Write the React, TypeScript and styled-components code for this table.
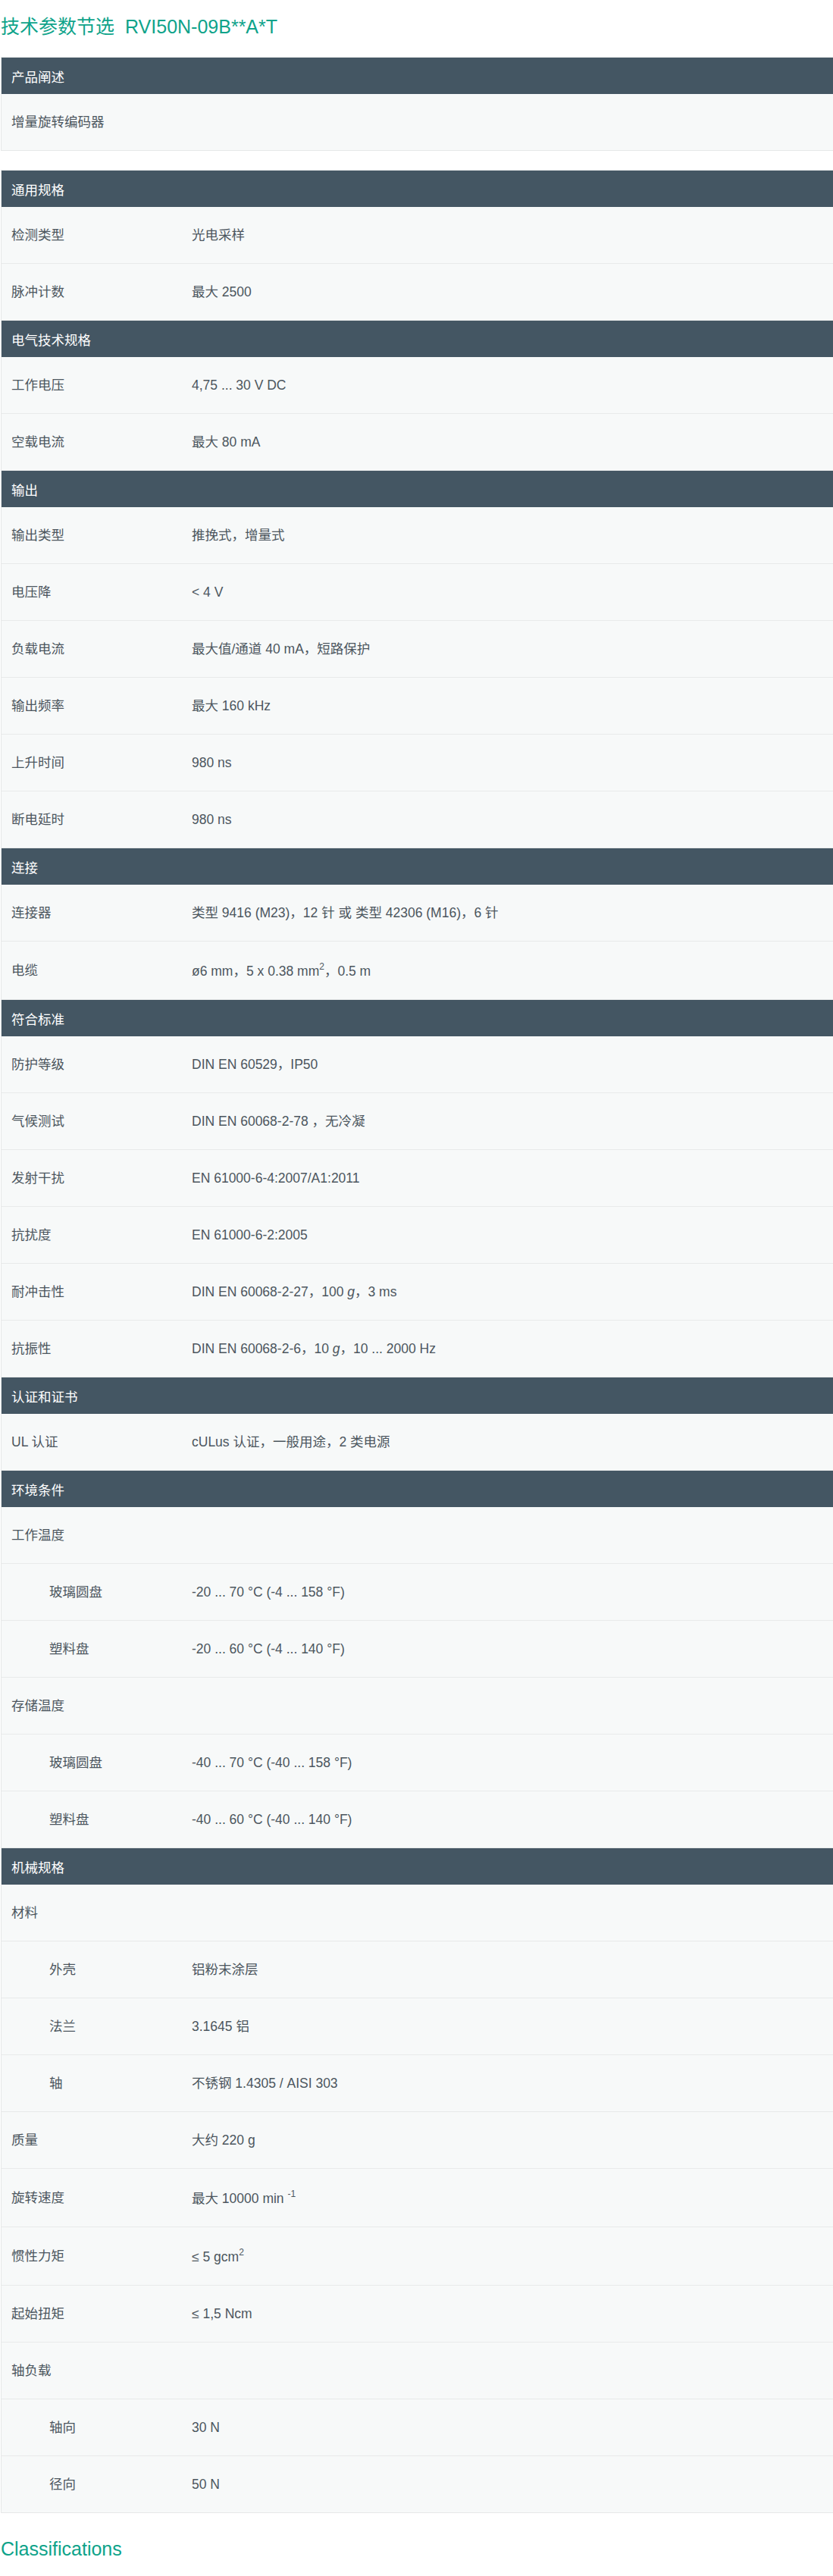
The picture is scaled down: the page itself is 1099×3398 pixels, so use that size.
import React from 'react'
import styled, { createGlobalStyle } from 'styled-components'

const GlobalStyle = createGlobalStyle`
  html, body {
    margin: 0;
    padding: 0;
    background: #ffffff;
    overflow-x: hidden;
  }

  body {
    font-family: "Liberation Sans", Arial, "Noto Sans CJK SC", sans-serif;
    font-size: 17.5px;
    color: #4c565e;
  }
`

const Page = styled.div`
  padding: 0 0 26px 1px;
  width: 1100px;
`

const Heading = styled.h1`
  margin: 0 0 25px;
  padding-top: 20px;
  font-size: 25px;
  line-height: 30px;
  font-weight: normal;
  color: #0ea38a;
`

const Model = styled.span`
  margin-left: 14px;
`

const SubHeading = styled.h2`
  margin: 32px 0 0;
  font-size: 25px;
  line-height: 30px;
  font-weight: normal;
  color: #0ea38a;
`

const SpecTable = styled.section<{ $gap?: boolean }>`
  border: 1px solid #e6e8e8;
  border-right: none;
  background: #f7f9f9;
  margin-bottom: ${(p) => (p.$gap ? '25px' : '0')};
`

const SectionHeader = styled.div`
  display: flex;
  align-items: center;
  height: 48px;
  padding-left: 13px;
  background: #445663;
  color: #ffffff;
`

const Row = styled.div`
  display: grid;
  grid-template-columns: 251px 1fr;
  align-items: center;
  padding: 25px 0;
  line-height: 24px;
  border-bottom: 1px solid #e8eaea;

  &:last-child {
    border-bottom: none;
  }
`

const Label = styled.div<{ $indent?: boolean }>`
  padding-left: ${(p) => (p.$indent ? '63px' : '13px')};
`

const Value = styled.div`
  padding-right: 13px;
`

// raised a little higher than the browser default; opens its row by a few px
const Sup = styled.sup`
  font-size: 12px;
  line-height: 17px;
  vertical-align: 8px;
`

type Spec = { label: string; value?: React.ReactNode; indent?: boolean }
type Section = { title: string; rows: Spec[] }

const sections: Section[] = [
  {
    title: '通用规格',
    rows: [
      { label: '检测类型', value: '光电采样' },
      { label: '脉冲计数', value: '最大 2500' },
    ],
  },
  {
    title: '电气技术规格',
    rows: [
      { label: '工作电压', value: '4,75 ... 30 V DC' },
      { label: '空载电流', value: '最大 80 mA' },
    ],
  },
  {
    title: '输出',
    rows: [
      { label: '输出类型', value: '推挽式，增量式' },
      { label: '电压降', value: '< 4 V' },
      { label: '负载电流', value: '最大值/通道 40 mA，短路保护' },
      { label: '输出频率', value: '最大 160 kHz' },
      { label: '上升时间', value: '980 ns' },
      { label: '断电延时', value: '980 ns' },
    ],
  },
  {
    title: '连接',
    rows: [
      { label: '连接器', value: '类型 9416 (M23)，12 针 或 类型 42306 (M16)，6 针' },
      {
        label: '电缆',
        value: (
          <>
            ø6 mm，5 x 0.38 mm<Sup>2</Sup>，0.5 m
          </>
        ),
      },
    ],
  },
  {
    title: '符合标准',
    rows: [
      { label: '防护等级', value: 'DIN EN 60529，IP50' },
      { label: '气候测试', value: 'DIN EN 60068-2-78 ，无冷凝' },
      { label: '发射干扰', value: 'EN 61000-6-4:2007/A1:2011' },
      { label: '抗扰度', value: 'EN 61000-6-2:2005' },
      {
        label: '耐冲击性',
        value: (
          <>
            DIN EN 60068-2-27，100 <i>g</i>，3 ms
          </>
        ),
      },
      {
        label: '抗振性',
        value: (
          <>
            DIN EN 60068-2-6，10 <i>g</i>，10 ... 2000 Hz
          </>
        ),
      },
    ],
  },
  {
    title: '认证和证书',
    rows: [{ label: 'UL 认证', value: 'cULus 认证，一般用途，2 类电源' }],
  },
  {
    title: '环境条件',
    rows: [
      { label: '工作温度' },
      { label: '玻璃圆盘', value: '-20 ... 70 °C (-4 ... 158 °F)', indent: true },
      { label: '塑料盘', value: '-20 ... 60 °C (-4 ... 140 °F)', indent: true },
      { label: '存储温度' },
      { label: '玻璃圆盘', value: '-40 ... 70 °C (-40 ... 158 °F)', indent: true },
      { label: '塑料盘', value: '-40 ... 60 °C (-40 ... 140 °F)', indent: true },
    ],
  },
  {
    title: '机械规格',
    rows: [
      { label: '材料' },
      { label: '外壳', value: '铝粉末涂层', indent: true },
      { label: '法兰', value: '3.1645 铝', indent: true },
      { label: '轴', value: '不锈钢 1.4305 / AISI 303', indent: true },
      { label: '质量', value: '大约 220 g' },
      {
        label: '旋转速度',
        value: (
          <>
            最大 10000 min <Sup>-1</Sup>
          </>
        ),
      },
      {
        label: '惯性力矩',
        value: (
          <>
            ≤ 5 gcm<Sup>2</Sup>
          </>
        ),
      },
      { label: '起始扭矩', value: '≤ 1,5 Ncm' },
      { label: '轴负载' },
      { label: '轴向', value: '30 N', indent: true },
      { label: '径向', value: '50 N', indent: true },
    ],
  },
]

function App() {
  return (
    <Page>
      <GlobalStyle />
      <Heading>
        技术参数节选<Model>RVI50N-09B**A*T</Model>
      </Heading>

      <SpecTable $gap>
        <SectionHeader>产品阐述</SectionHeader>
        <Row>
          <Label>增量旋转编码器</Label>
        </Row>
      </SpecTable>

      <SpecTable>
        {sections.map((section) => (
          <React.Fragment key={section.title}>
            <SectionHeader>{section.title}</SectionHeader>
            {section.rows.map((row, i) => (
              <Row key={section.title + i}>
                <Label $indent={row.indent}>{row.label}</Label>
                <Value>{row.value}</Value>
              </Row>
            ))}
          </React.Fragment>
        ))}
      </SpecTable>

      <SubHeading>Classifications</SubHeading>
    </Page>
  )
}

export default App
